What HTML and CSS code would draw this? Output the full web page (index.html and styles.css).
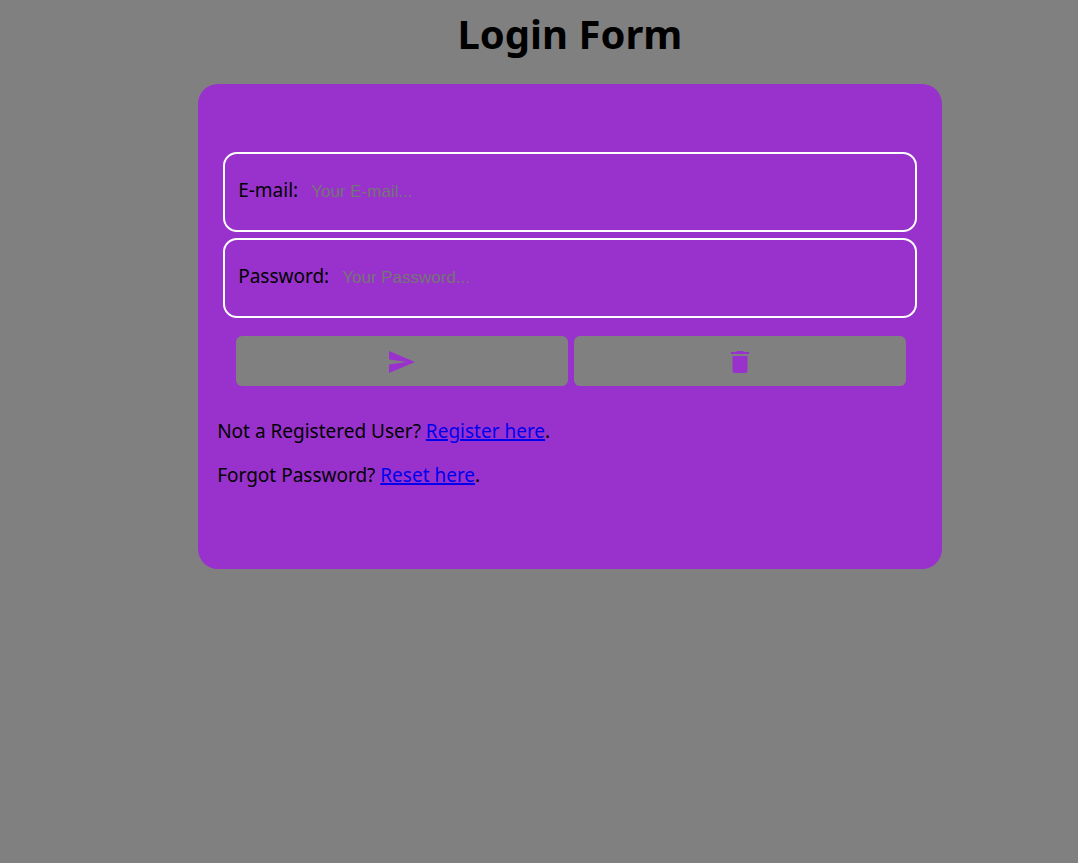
FILE: index.html
```html
<!DOCTYPE html>
<html lang="en">
<head>
<meta charset="utf-8">
<meta name="viewport" content="width=device-width, initial-scale=1">
<title>Login Form</title>
<link rel="stylesheet" href="styles.css">
</head>
<body>
<main class="page">
  <h1 class="title">Login Form</h1>
  <form class="card">
    <div class="fields">
      <div class="field">
        <label for="email">E-mail:</label>
        <input id="email" type="email" placeholder="Your E-mail...">
      </div>
      <div class="field">
        <label for="password">Password:</label>
        <input id="password" type="password" placeholder="Your Password...">
      </div>
    </div>
    <div class="actions">
      <button class="button" type="submit" aria-label="Send">
        <svg class="icon" viewBox="0 0 30 30" aria-hidden="true"><path d="M2 4 28 15 2 26V17.5L20 15 2 12.5Z"/></svg>
      </button>
      <button class="button" type="reset" aria-label="Clear">
        <svg class="icon" viewBox="0 0 30 30" aria-hidden="true"><path d="M6 5h5l1-1h6l1 1h5v2H6ZM7.500 9h15v15a2 2 0 0 1-2 2h-11a2 2 0 0 1-2-2Z"/></svg>
      </button>
    </div>
    <div class="links">
      <p>Not a Registered User? <a href="#register">Register here</a>.</p>
      <p>Forgot Password? <a href="#reset">Reset here</a>.</p>
    </div>
  </form>
</main>
</body>
</html>
```
FILE: styles.css
```css
* {
  box-sizing: border-box;
}

body {
  margin: 8px;
  background: #808080;
  color: #000;
  font-family: Tahoma, "Noto Sans", sans-serif;
  font-size: 19px;
  line-height: 24px;
}

.page {
  width: 70%;
  margin-left: calc(18% - 1px);
}

.title {
  margin: 0 0 24px;
  font-size: 40px;
  line-height: 52px;
  text-align: center;
}

.card {
  padding: 68px 19px 82px;
  border-radius: 20px;
  background: #9932cc;
}

.fields {
  display: grid;
  gap: 6px;
  padding: 0 6px;
}

.field {
  display: flex;
  align-items: center;
  gap: 11px;
  height: 80px;
  padding: 0 13px 4px;
  border: 2px solid #fff;
  border-radius: 14px;
}

.field input {
  flex: 1;
  min-width: 0;
  padding: 4px 2px 0;
  border: 0;
  background: transparent;
  font-family: "Liberation Sans", Arial, sans-serif;
  font-size: 17px;
  line-height: 20px;
}

.field input::placeholder {
  color: #757575;
}

.actions {
  display: flex;
  gap: 6px;
  padding: 18px 17px 0 19px;
}

.button {
  display: flex;
  flex: 1;
  align-items: center;
  justify-content: center;
  height: 50px;
  padding: 2px 0 0;
  border: 0;
  border-radius: 6px;
  background: #808080;
  color: #9932cc;
}

.icon {
  width: 30px;
  height: 30px;
  fill: currentColor;
}

.links {
  display: grid;
  gap: 20px;
  padding-top: 33px;
}

.links p {
  margin: 0;
}

.links a {
  color: #00e;
  text-decoration-thickness: 2px;
}
```
